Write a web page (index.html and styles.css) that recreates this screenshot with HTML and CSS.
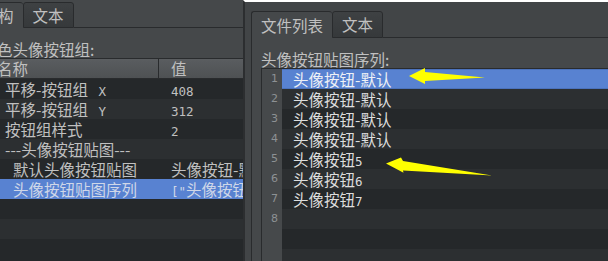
FILE: index.html
```html
<!DOCTYPE html>
<html lang="zh">
<head>
<meta charset="utf-8">
<link rel="stylesheet" href="styles.css">
</head>
<body>
<div class="screen">
  <section class="lp">
    <div class="tabbar">
      <div class="tab sel clip">构</div>
      <div class="tab">文本</div>
      <div class="fill"></div>
    </div>
    <div class="plabel shift">色头像按钮组:</div>
    <div class="thead">
      <div class="th1">名称</div>
      <div class="th2">值</div>
    </div>
    <div class="tbody">
      <div class="trow"><div class="c1">平移-按钮组<span class="m gap"> X</span></div><div class="c2"><span class="m">408</span></div></div>
      <div class="trow"><div class="c1">平移-按钮组<span class="m gap"> Y</span></div><div class="c2"><span class="m">312</span></div></div>
      <div class="trow"><div class="c1">按钮组样式</div><div class="c2"><span class="m">2</span></div></div>
      <div class="trow"><div class="c1">---头像按钮贴图---</div><div class="c2"></div></div>
      <div class="trow"><div class="c1 ind">默认头像按钮贴图</div><div class="c2">头像按钮-默认</div></div>
      <div class="trow sel"><div class="c1 ind">头像按钮贴图序列</div><div class="c2"><span class="m">["</span>头像按钮-默认</div></div>
      <div class="trow"><div class="c1"></div><div class="c2"></div></div>
      <div class="trow"><div class="c1"></div><div class="c2"></div></div>
      <div class="trow"><div class="c1"></div><div class="c2"></div></div>
    </div>
  </section>
  <section class="rp">
    <div class="tabbar">
      <div class="tab sel">文件列表</div>
      <div class="tab">文本</div>
      <div class="fill"></div>
    </div>
    <div class="rbox">
      <div class="plabel">头像按钮贴图序列:</div>
      <div class="list">
        <div class="lrow sel"><div class="ln">1</div><div class="lt">头像按钮-默认</div></div>
        <div class="lrow"><div class="ln">2</div><div class="lt">头像按钮-默认</div></div>
        <div class="lrow"><div class="ln">3</div><div class="lt">头像按钮-默认</div></div>
        <div class="lrow"><div class="ln">4</div><div class="lt">头像按钮-默认</div></div>
        <div class="lrow"><div class="ln">5</div><div class="lt">头像按钮<span class="m">5</span></div></div>
        <div class="lrow"><div class="ln">6</div><div class="lt">头像按钮<span class="m">6</span></div></div>
        <div class="lrow"><div class="ln">7</div><div class="lt">头像按钮<span class="m">7</span></div></div>
        <div class="lrow"><div class="ln">8</div><div class="lt"></div></div>
        <div class="lrow"><div class="ln"></div><div class="lt"></div></div>
        <div class="lrow"><div class="ln"></div><div class="lt"></div></div>
      </div>
    </div>
  </section>
</div>
<svg class="anno" width="608" height="261" viewBox="0 0 608 261">
  <polygon points="409,76 425,68 425,72 485,77.5 425,81 425,84" fill="#ffff00"/>
  <polygon points="386,163.5 401,157.5 403,161 492,175.5 403,170.5 403.5,172.7" fill="#ffff00"/>
</svg>
</body>
</html>
```
FILE: styles.css
```css
* { box-sizing: border-box; margin: 0; padding: 0; }
html, body { width: 608px; height: 261px; overflow: hidden; }
body {
  position: relative;
  background: #45484a;
  font-family: "Noto Sans CJK SC", "Noto Sans", sans-serif;
  font-size: 15.5px;
  color: #c0c0c0;
}
.screen { display: flex; height: 261px; }

.lp {
  width: 243px; flex: none; overflow: hidden;
  display: flex; flex-direction: column;
  background: #45484a;
}
.rp {
  flex: 1; min-width: 0; overflow: hidden;
  display: flex; flex-direction: column;
  border-top: 2px solid #ffffff;
  border-left: 2px solid #2c2e30;
  background: #424547;
}

.tabbar { display: flex; align-items: flex-end; flex: none; }
.lp .tabbar { height: 28px; }
.rp .tabbar { height: 36px; padding-left: 6px; }

.tab {
  height: 26px; line-height: 24px; padding: 0 9px;
  border: 1px solid #292b2d; border-radius: 3px 3px 0 0;
  background: linear-gradient(#3e4143, #36393b);
  color: #c0c0c0; white-space: nowrap; flex: none;
}
.rp .tab { height: 27px; line-height: 25px; }
.tab.sel { background: #45484a; border-bottom: none; border-right: none; line-height: 25px; }
.rp .tab.sel { line-height: 26px; }
.tab.clip { margin-left: -12px; }
.fill { flex: 1; align-self: stretch; border-bottom: 1px solid #292b2d; }

.plabel { padding-top: 13px; line-height: 17px; white-space: nowrap; flex: none; }
.shift { text-indent: -3px; }

.thead {
  display: grid; grid-template-columns: 159px 1fr;
  height: 21px; line-height: 19px; flex: none;
  border-top: 1px solid #292b2d; border-bottom: 1px solid #292b2d;
  background: linear-gradient(#5a5d60, #4e5153);
}
.th1 { border-right: 1px solid #292b2d; text-indent: -3px; white-space: nowrap; overflow: hidden; }
.th2 { padding-left: 12px; }

.tbody { flex: 1; background: #25282a; }
.trow {
  display: grid; grid-template-columns: 159px 1fr;
  height: 20px; line-height: 20px; background: #25282a;
}
.trow:nth-child(even) { background: #2c2f31; }
.trow.sel { background: #5882d1; color: #cfd7e8; }
.c1 { padding-left: 5px; white-space: nowrap; overflow: hidden; }
.c1.ind { padding-left: 13px; }
.c2 { padding-left: 12px; white-space: nowrap; overflow: hidden; }

.m { font-family: "DejaVu Sans Mono", monospace; font-size: 12.5px; }
.m.gap { padding-left: 3px; }

.rbox {
  flex: 1; display: flex; flex-direction: column;
  margin-left: 6px; padding-left: 9px;
  border-left: 1px solid #292b2d;
  background: #45484a;
}
.list {
  flex: 1; overflow: hidden;
  border-top: 1px solid #292b2d; border-left: 1px solid #292b2d;
}
.lrow { display: flex; height: 20px; line-height: 20px; }
.ln {
  width: 20px; flex: none; background: #46494b;
  text-align: right; padding-right: 4px;
  font-family: "DejaVu Sans", sans-serif; font-size: 11px; color: #8d9194;
}
.lt { flex: 1; padding-left: 11px; color: #dddddd; background: #25282a; white-space: nowrap; }
.lrow:nth-child(even) .lt { background: #2c2f31; }
.lrow.sel .lt {
  background: #5882d1; color: #eef1f7;
  box-shadow: inset 0 1px 0 #4b72bc, inset 0 -1px 0 #4b72bc;
}

.anno { position: absolute; left: 0; top: 0; pointer-events: none; }
```
